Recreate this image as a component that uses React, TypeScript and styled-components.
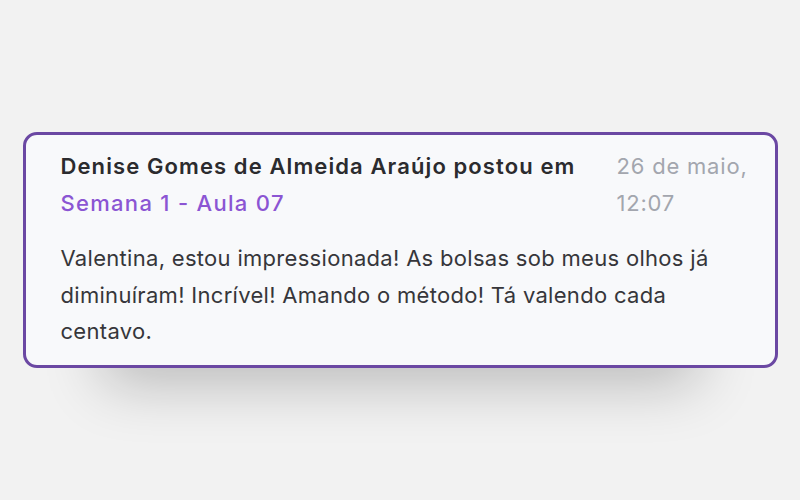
import React from 'react';
import styled, { createGlobalStyle } from 'styled-components';

const GlobalStyle = createGlobalStyle`
    html, body {
        margin: 0;
        padding: 0;
        background-color: #F2F2F2;
    }
    body {
        font-family: Inter, "Noto Sans", "Liberation Sans", sans-serif;
    }
`;

const Page = styled.div`
    width: 800px;
    height: 500px;
    display: flex;
    justify-content: center;
    align-items: center;
`;

const Card = styled.div`
    width: 755px;
    box-sizing: border-box;
    background-color: #F8F9FB;
    border: 3px solid #6B48A3;
    border-radius: 14px;
    padding: 13px 26px 15px 35px;
    box-shadow: 0 95px 60px -80px rgba(0, 0, 0, 0.24);
`;

const Header = styled.div`
    display: flex;
    justify-content: space-between;
    gap: 28px;
    margin-bottom: 19px;
`;

const Title = styled.div`
    font-size: 22px;
    line-height: 36.5px;
    font-weight: 600;
    letter-spacing: 1.1px;
    color: #2B2B2E;
`;

const LessonLink = styled.a`
    display: block;
    color: #8B55D3;
    font-weight: 500;
    letter-spacing: 1.3px;
    text-decoration: none;
`;

const PostDate = styled.div`
    width: 132px;
    flex-shrink: 0;
    font-size: 22px;
    line-height: 36.5px;
    letter-spacing: 0.8px;
    color: #A3A6AE;
`;

const Body = styled.p`
    margin: 0;
    font-size: 22px;
    line-height: 36.5px;
    letter-spacing: 0.3px;
    color: #36363A;
`;

const App = () => {
    return (
        <Page>
            <GlobalStyle />
            <Card>
                <Header>
                    <Title>
                        Denise Gomes de Almeida Araújo postou em
                        <LessonLink href="#">Semana 1 - Aula 07</LessonLink>
                    </Title>
                    <PostDate>26 de maio, 12:07</PostDate>
                </Header>
                <Body>
                    Valentina, estou impressionada! As bolsas sob meus olhos já diminuíram! Incrível! Amando o método! Tá valendo cada centavo.
                </Body>
            </Card>
        </Page>
    );
};

export default App;
